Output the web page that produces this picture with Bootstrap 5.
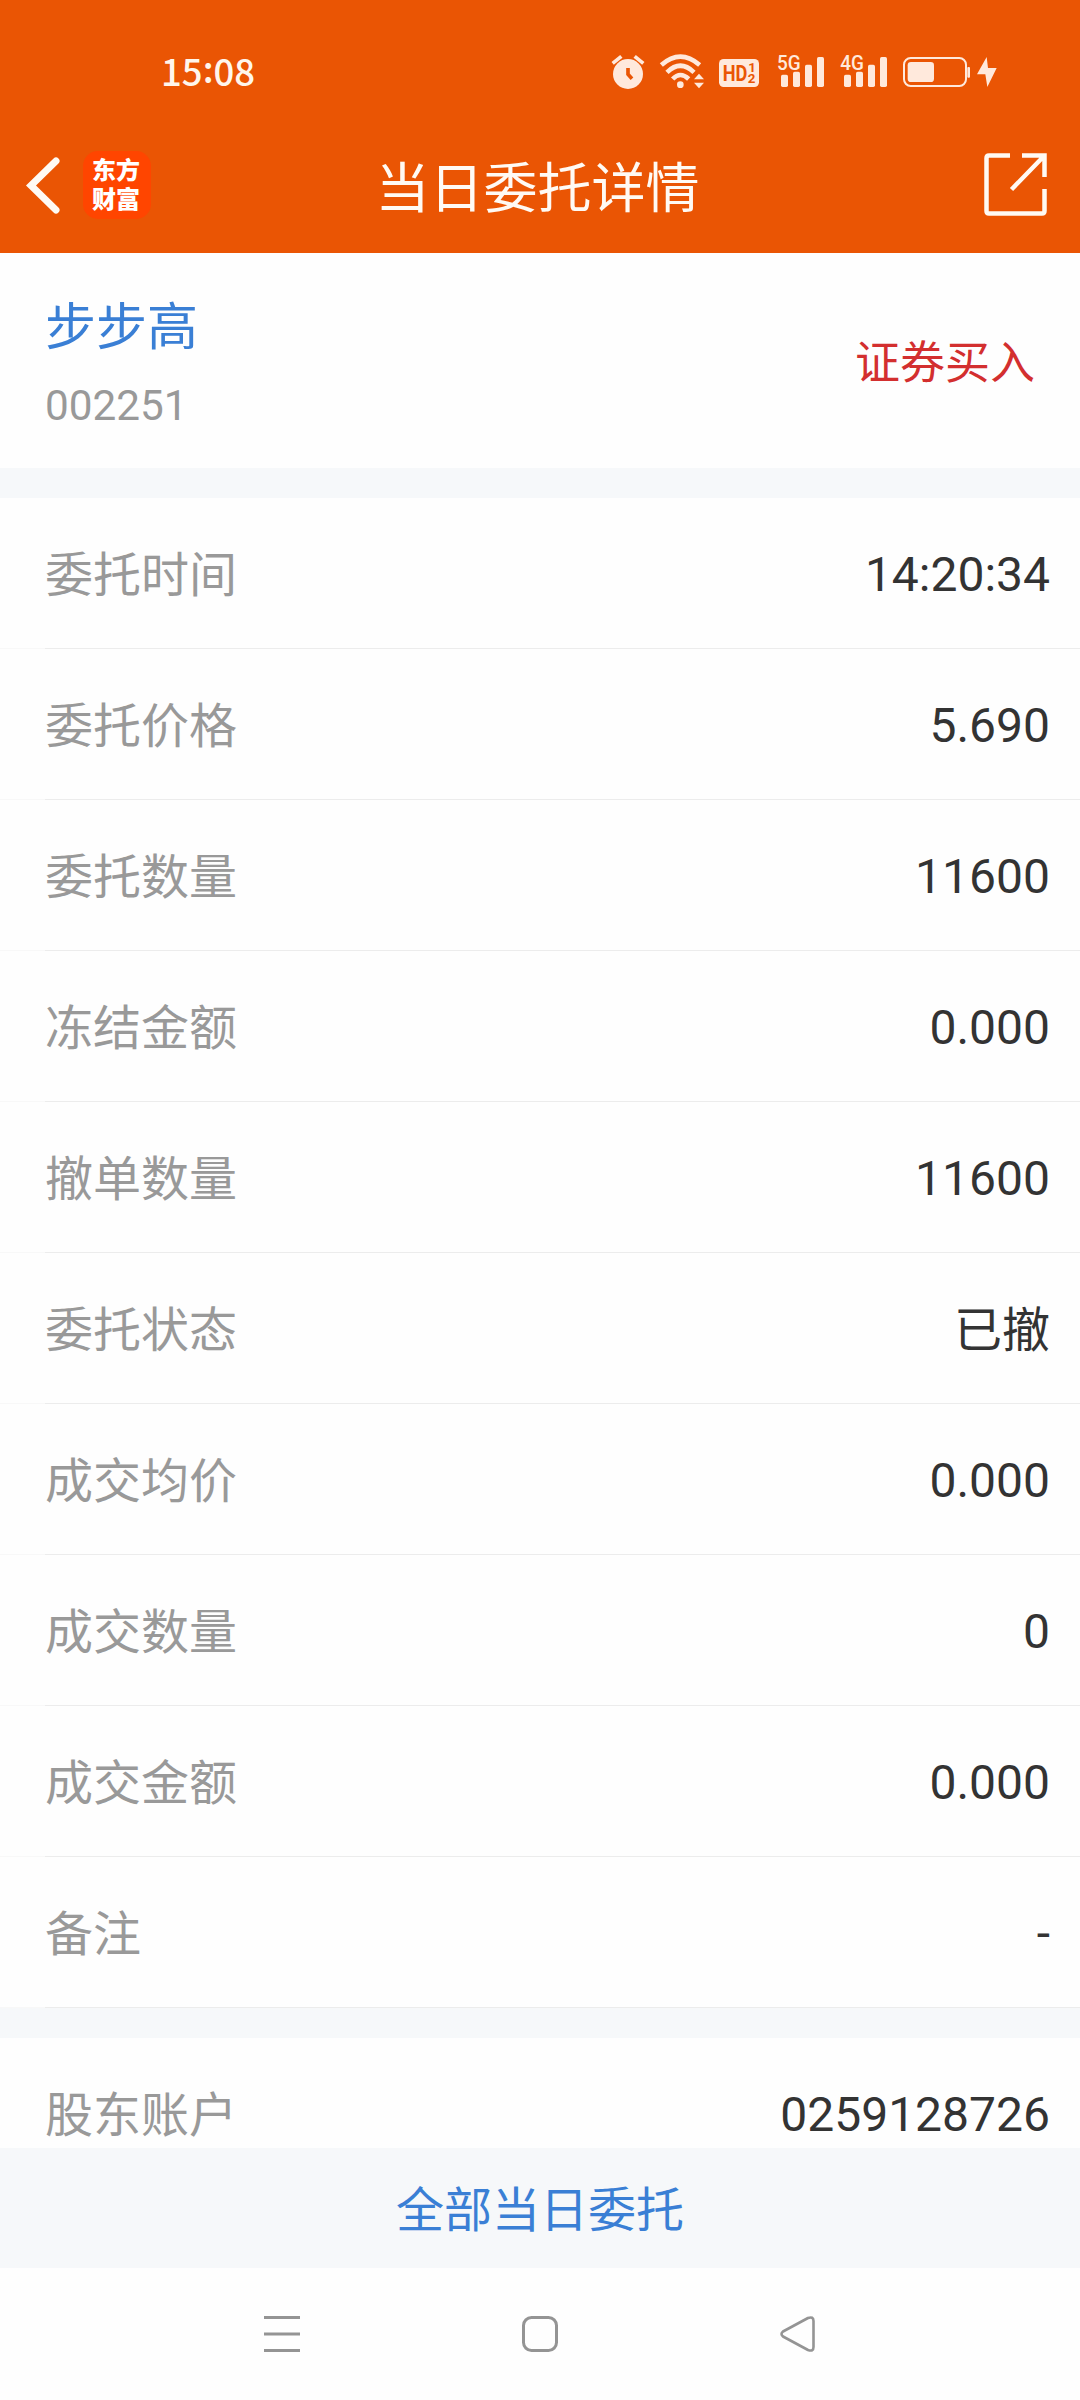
<!DOCTYPE html>
<html lang="zh-CN">
<head>
<meta charset="utf-8">
<meta name="viewport" content="width=device-width, initial-scale=1">
<title>当日委托详情</title>
<link href="https://cdn.jsdelivr.net/npm/bootstrap@5.3.0/dist/css/bootstrap.min.css" rel="stylesheet">
<style>
  body { font-family: Roboto, "Noto Sans CJK SC", sans-serif; width: 1080px; height: 2400px; background: #fefefe; color: #333; overflow: hidden; }
  .app-top { background: #ea5504; height: 253px; color: #fffaf4; }
  .status-row { height: 120px; padding: 40px 60px 0 161px; }
  .clock { font: 500 36.5px/62px "Noto Sans CJK SC", sans-serif; color: #fff6ec; }
  .clock span { position: relative; top: -3px; }
  .title-row { height: 130px; padding: 0 32px 0 23px; }
  .title-side { width: 160px; }
  .page-title { font-size: 54px; line-height: 64px; padding: 9px 0 0 4px; }
  .logo-tile { width: 68px; height: 68px; border-radius: 15px; background: #ff4500; color: #fff; font: 900 24px/29px "Noto Sans CJK SC", sans-serif; margin-left: 22px; padding: 3px 2px 0 0; }
  .stock-head { height: 215px; padding: 0 45px; }
  .stock-name { font-size: 51px; line-height: 60px; color: #3a7fd5; }
  .stock-code { font-size: 42.3px; line-height: 50px; color: #999; margin-top: 23px; margin-bottom: -7px; }
  .side-tag { font-size: 45px; color: #d32f2f; padding-top: 7px; }
  .band { height: 30px; background: #f6f8fa; }
  .entry { height: 151px; font-size: 48px; padding: 2px 30px 0 45px; border: 0; background: linear-gradient(90deg, #f8f8f8 45px, #ececec 45px) 0 100% / 1080px 1px no-repeat #fefefe; }
  .entry dt { font-weight: 400; color: #999; padding-top: 2px; }
  .entry .cjk-value { padding-top: 3px; }
  .clip-area { height: 110px; overflow: hidden; }
  .all-btn { height: 120px; background: #f6f8fa; color: #3a7fd5; font-size: 48px; border: 0; border-radius: 0; padding-top: 12px; }
  .sys-nav { height: 132px; padding: 0 264px; }
</style>
</head>
<body class="d-flex flex-column">
<header class="app-top flex-shrink-0">
  <div class="status-row d-flex justify-content-between align-items-start">
    <div class="clock">15<span>:</span>08</div>
    <svg width="430" height="65" viewBox="0 0 1290 195" fill="#ffe9dc">
      <circle cx="114" cy="102" r="45"/>
      <path d="M68 70L94 49M160 70L134 49" stroke="#ffe9dc" stroke-width="11"/>
      <path d="M114 84V103L126 116" fill="none" stroke="#ea5504" stroke-width="11"/>
      <g fill="none" stroke="#ffe9dc" stroke-width="14">
        <path d="M214 75Q271 25 329 75"/><path d="M231 97Q271 58 312 97"/><path d="M248 117Q271 93 296 117"/>
      </g>
      <circle cx="271" cy="134" r="10"/>
      <path d="M312 118L327 101L342 118ZM312 128L327 145L342 128Z"/>
      <rect x="387" y="57" width="120" height="84" rx="14"/>
      <g fill="#ea5504" font-family="Roboto, sans-serif" font-weight="700">
        <text x="398" y="123" font-size="64" textLength="74" lengthAdjust="spacingAndGlyphs">HD</text>
        <text x="475" y="95" font-size="40">1</text><text x="473" y="130" font-size="40">2</text>
      </g>
      <g font-family="Roboto, sans-serif" font-weight="500" font-size="61">
        <text x="561" y="90" textLength="71" lengthAdjust="spacingAndGlyphs">5G</text>
        <text x="751" y="90" textLength="71" lengthAdjust="spacingAndGlyphs">4G</text>
      </g>
      <g id="bars"><rect x="573" y="104" width="21" height="37" rx="5"/><rect x="609" y="95" width="21" height="46" rx="5"/><rect x="645" y="74" width="21" height="67" rx="5"/><rect x="681" y="51" width="21" height="90" rx="5"/></g>
      <use href="#bars" x="189"/>
      <rect x="942" y="54" width="186" height="84" rx="20" fill="none" stroke="#ffe9dc" stroke-width="6"/>
      <rect x="953" y="66" width="79" height="60" rx="10"/>
      <rect x="1132" y="81" width="8" height="32" rx="3"/>
      <path d="M1190 51L1161 103H1186L1192 141L1220 84H1194Z"/>
    </svg>
  </div>
  <div class="title-row d-flex align-items-center justify-content-between">
    <div class="title-side d-flex align-items-center">
      <svg width="38" height="60" viewBox="0 0 38 60" fill="none" stroke="#fffaf4" stroke-width="7" stroke-linecap="round" stroke-linejoin="miter"><path d="M33 6L8 30.500L33 55"/></svg>
      <div class="logo-tile text-center">东方<br>财富</div>
    </div>
    <div class="page-title">当日委托详情</div>
    <div class="title-side text-end">
      <svg class="d-block ms-auto" width="64" height="64" viewBox="0 0 64 64" fill="none" stroke="#fffaf4" stroke-width="4.500"><path d="M26 2.500H5Q2.500 2.500 2.500 5V58Q2.500 60.500 5 60.500H58Q60.500 60.500 60.500 58V36M38 2.500H60.500V24M60.500 2.500L27.500 36.500"/></svg>
    </div>
  </div>
</header>
<main class="flex-shrink-0">
  <section class="stock-head d-flex justify-content-between align-items-center">
    <div><div class="stock-name">步步高</div><div class="stock-code">002251</div></div>
    <div class="side-tag">证券买入</div>
  </section>
  <div class="band"></div>
  <dl class="list-group list-group-flush mb-0">
    <div class="entry d-flex justify-content-between align-items-center"><dt>委托时间</dt><dd class="mb-0">14:20:34</dd></div>
    <div class="entry d-flex justify-content-between align-items-center"><dt>委托价格</dt><dd class="mb-0">5.690</dd></div>
    <div class="entry d-flex justify-content-between align-items-center"><dt>委托数量</dt><dd class="mb-0">11600</dd></div>
    <div class="entry d-flex justify-content-between align-items-center"><dt>冻结金额</dt><dd class="mb-0">0.000</dd></div>
    <div class="entry d-flex justify-content-between align-items-center"><dt>撤单数量</dt><dd class="mb-0">11600</dd></div>
    <div class="entry d-flex justify-content-between align-items-center"><dt>委托状态</dt><dd class="cjk-value mb-0">已撤</dd></div>
    <div class="entry d-flex justify-content-between align-items-center"><dt>成交均价</dt><dd class="mb-0">0.000</dd></div>
    <div class="entry d-flex justify-content-between align-items-center"><dt>成交数量</dt><dd class="mb-0">0</dd></div>
    <div class="entry d-flex justify-content-between align-items-center"><dt>成交金额</dt><dd class="mb-0">0.000</dd></div>
    <div class="entry d-flex justify-content-between align-items-center"><dt>备注</dt><dd class="mb-0">-</dd></div>
  </dl>
  <div class="band"></div>
  <dl class="clip-area mb-0">
    <div class="entry d-flex justify-content-between align-items-center"><dt>股东账户</dt><dd class="mb-0">0259128726</dd></div>
  </dl>
</main>
<button class="all-btn btn w-100 flex-shrink-0">全部当日委托</button>
<nav class="sys-nav d-flex justify-content-between align-items-center flex-shrink-0">
  <svg width="36" height="36" viewBox="0 0 36 36" stroke="#949494" stroke-width="3"><path d="M0 1.500H36M0 18H36M0 34.500H36"/></svg>
  <svg width="36" height="36" viewBox="0 0 36 36" fill="none" stroke="#949494" stroke-width="3"><rect x="1.500" y="1.500" width="33" height="33" rx="8"/></svg>
  <svg width="36" height="36" viewBox="0 0 36 36" fill="none" stroke="#949494" stroke-width="2.600" stroke-linejoin="round"><path d="M3 15.500L28 2Q33.500 0 33.500 5V31Q33.500 36 28 34L3 20.500Q0 18 3 15.500Z"/></svg>
</nav>
<script src="https://cdn.jsdelivr.net/npm/bootstrap@5.3.0/dist/js/bootstrap.bundle.min.js"></script>
</body>
</html>
